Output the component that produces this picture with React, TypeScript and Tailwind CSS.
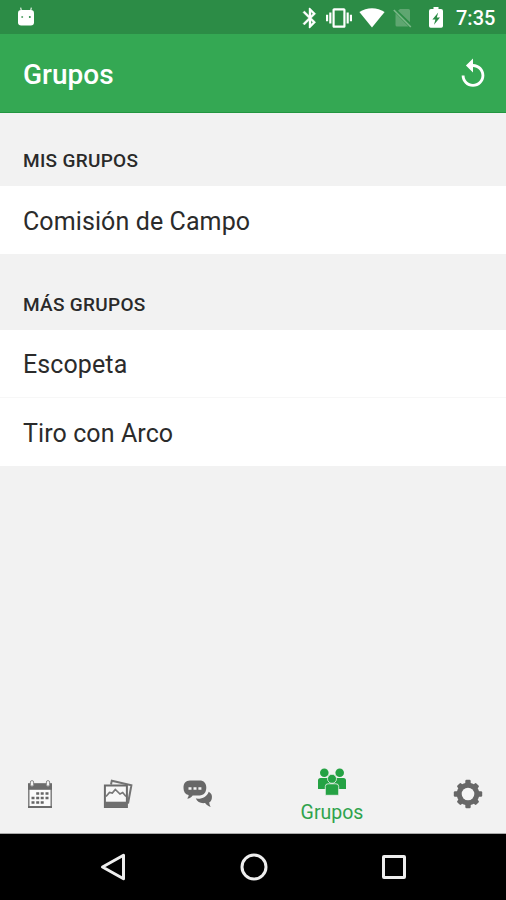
import React from 'react'

const AndroidHead = () => (
  <svg className="h-5 w-4" viewBox="0 0 16 20" fill="none">
    <path d="M3.6 4.5 2.6.6M12.4 4.5l1-3.9" stroke="#d5ead9" strokeWidth="1.3" />
    <rect x="0" y="3" width="16" height="15.5" rx="3.2" fill="#fff" />
    <circle cx="4.2" cy="10" r="1" fill="#5aa56c" />
    <circle cx="11.8" cy="10" r="1" fill="#2c8c46" />
  </svg>
)

const Bluetooth = () => (
  <svg className="h-6 w-6" viewBox="0 0 24 24" fill="currentColor" stroke="currentColor" strokeWidth=".4">
    <path d="M17.71 7.71 12 2h-1v7.59L6.41 5 5 6.41 10.59 12 5 17.59 6.41 19 11 14.41V22h1l5.71-5.71-4.3-4.29 4.3-4.29zM13 5.83l1.88 1.88L13 9.59V5.83zm1.88 10.46L13 18.17v-3.76l1.88 1.88z" />
  </svg>
)

const Vibration = () => (
  <svg className="h-[26px] w-[26px]" viewBox="0 0 24 24" fill="currentColor">
    <path d="M0 15h2V9H0v6zm3 2h2V7H3v10zm19-8v6h2V9h-2zm-3 8h2V7h-2v10zM16.5 3h-9C6.67 3 6 3.67 6 4.5v15c0 .83.67 1.5 1.5 1.5h9c.83 0 1.5-.67 1.5-1.5v-15c0-.83-.67-1.5-1.5-1.5zM16 19H8V5h8v14z" />
  </svg>
)

const Wifi = () => (
  <svg className="h-5 w-[26px]" viewBox="0 0 26 20" fill="currentColor">
    <path d="M13 19.5.4 4C4 1.5 8.4.2 13 .2S22 1.5 25.6 4z" />
  </svg>
)

const NoSim = () => (
  <svg className="h-5 w-[19px]" viewBox="0 0 19 20" fill="none">
    <path d="M7 1h8.5q1.5 0 1.5 1.5v11.8L5 2.7zM2.5 5.2 15.5 18.5H4q-1.5 0-1.5-1.5z" fill="#5fa671" />
    <path d="m.8 2 17 17" stroke="#7cb88a" strokeWidth="1.6" />
  </svg>
)

const Battery = () => (
  <svg className="h-[21px] w-[14px]" viewBox="0 0 14 21">
    <path
      d="M4.5 0h5v2H12q2 0 2 2v15q0 1.7-1.7 1.7H1.7Q0 20.7 0 19V4q0-2 2-2h2.5zM9.2 5.5 3.4 12.4h3L5 17.8l6-7.4H7.8z"
      fill="currentColor"
      fillRule="evenodd"
    />
  </svg>
)

const Replay = () => (
  <svg className="h-[34px] w-[34px]" viewBox="0 0 24 24" fill="currentColor">
    <path d="M12 5V1L7 6l5 5V7c3.31 0 6 2.69 6 6s-2.69 6-6 6-6-2.69-6-6H4c0 4.42 3.58 8 8 8s8-3.58 8-8-3.58-8-8-8z" />
  </svg>
)

const CalendarIcon = () => (
  <svg className="h-[30px] w-[30px]" viewBox="0 0 30 30" fill="none">
    <rect x="3.8" y="5" width="22.4" height="23" fill="#fafafa" stroke="#777" strokeWidth="1.4" />
    <path d="M3 4.5h24v6.3H3z" fill="#6b6b6b" />
    <path d="M3 28h24" stroke="#6b6b6b" strokeWidth="2" />
    <rect x="5.4" y="1.6" width="3.2" height="5.6" rx="1.5" fill="#f3f3f3" stroke="#888" />
    <rect x="21.4" y="1.6" width="3.2" height="5.6" rx="1.5" fill="#f3f3f3" stroke="#888" />
    <path
      d="M11.2 14.5h3M15.7 14.5h3M20.5 14.5h3M6.5 19h3M11.2 19h3M15.7 19h3M20.5 19h3M6.5 23.5h3M11.2 23.5h3M15.7 23.5h3"
      stroke="#666"
      strokeWidth="2.6"
    />
  </svg>
)

const PhotosIcon = () => (
  <svg className="h-[30px] w-[30px]" viewBox="0 0 30 30" fill="none">
    <path d="M8 5.5 8.8 1.8l19.6 4.5L25 24.5" stroke="#747474" strokeWidth="2" />
    <rect x="1.9" y="6.5" width="22" height="21.5" fill="#f8f8f8" stroke="#6b6b6b" strokeWidth="2" />
    <path d="M2 22.7h22V28H2z" fill="#6f6f6f" />
    <path d="m3 17.5 3.5-4 2.8.5 3-3.5 4.7 4.5 2.7-1.5 3.3 4" stroke="#777" strokeWidth="1.7" />
  </svg>
)

const ChatIcon = () => (
  <svg className="h-[30px] w-[30px]" viewBox="0 0 30 30">
    <path
      d="M7 1.6h9.5c4.4 0 6.8 2.7 6.8 7.2s-2.4 7.6-6.8 7.6H9.7c-1.3 2-3.3 3.2-5.6 3.2 1-.9 1.6-2.3 1.5-3.5C2.2 15.4.5 12.7.5 9c0-4.6 2.1-7.4 6.5-7.4z"
      fill="#686868"
    />
    <path d="M5.5 8.3h3v2.4h-3zM10.5 8.3h3v2.4h-3zM15.4 8.3h3v2.4h-3z" fill="#f5f5f5" />
    <path
      d="M25.7 12.7c2.5 1.3 3.6 3.5 3.2 6.3-.3 2.2-1.2 3.6-2.6 4.3 0 1.8.5 3.2 1.4 4.6-2.5-.6-4.5-2-5.6-3.8-4.6.5-7.7-.8-9.3-4.5 6.3.7 11-1.6 12.9-6.9z"
      fill="#686868"
    />
  </svg>
)

const GroupsIcon = () => (
  <svg className="h-[30px] w-[30px]" viewBox="0 0 30 30" fill="#25a244">
    <circle cx="7.3" cy="5.8" r="4.3" />
    <circle cx="22.7" cy="5.8" r="4.3" />
    <path d="M1 13.5q0-2.5 2.5-2.5H11q2.5 0 2.5 2.5v8.5H1zM16.5 13.5q0-2.5 2.5-2.5h7.5q2.5 0 2.5 2.5v8.5H16.5z" />
    <g stroke="#f3f3f3" strokeWidth=".8">
      <path d="M8.3 19.5q0-2.7 2.7-2.7h8q2.7 0 2.7 2.7v8.8H8.3z" />
      <circle cx="15" cy="11.8" r="4.5" />
    </g>
  </svg>
)

const GearIcon = () => (
  <svg className="h-[30px] w-[30px]" viewBox="0 0 30 30">
    <g fill="#676767">
      <rect x="12.3" y=".8" width="5.4" height="28.4" rx="1.2" />
      <rect x="12.3" y="1.6" width="5.4" height="26.8" rx="1.2" transform="rotate(45 15 15)" />
      <rect x="12.3" y=".8" width="5.4" height="28.4" rx="1.2" transform="rotate(90 15 15)" />
      <rect x="12.3" y="1.6" width="5.4" height="26.8" rx="1.2" transform="rotate(135 15 15)" />
      <circle cx="15" cy="15" r="11.3" />
    </g>
    <circle cx="15" cy="15" r="6.3" fill="#f5f5f5" />
  </svg>
)

const SectionTitle = ({children}: {children: React.ReactNode}) => (
  <h2 className="px-[23px] pb-3 text-[19px] leading-7 font-medium tracking-[0.3px] text-[#2a2a2a]">
    {children}
  </h2>
)

const Row = ({children}: {children: React.ReactNode}) => (
  <li className="flex h-17 items-center bg-white px-[23px] pt-[3px] text-[25px] tracking-[0.1px] text-[#2b2b2b]">
    {children}
  </li>
)

const App = () => {
  return (
    <div className="flex h-[900px] w-[506px] flex-col overflow-hidden bg-[#f2f2f2] font-['Roboto',sans-serif]">
      <div className="flex h-[34px] shrink-0 items-center bg-[#2c8c46] pl-[18px] text-white">
        <AndroidHead />
        <div className="ml-[264px] flex items-center pt-px">
          <Bluetooth />
          <div className="ml-1">
            <Vibration />
          </div>
          <div className="ml-[7px]">
            <Wifi />
          </div>
          <div className="ml-2">
            <NoSim />
          </div>
          <div className="ml-[17px]">
            <Battery />
          </div>
          <span className="ml-[13px] pt-px text-xl font-medium">7:35</span>
        </div>
      </div>

      <header className="flex h-[79px] shrink-0 items-center justify-between border-b border-[#229640] bg-[#34a853] pr-4 pl-[23px] text-white">
        <h1 className="pt-1 text-[28px] font-medium">Grupos</h1>
        <div className="pt-0.5">
          <Replay />
        </div>
      </header>

      <main className="flex-1">
        <section className="pt-[34px]">
          <SectionTitle>MIS GRUPOS</SectionTitle>
          <ul className="-mt-px">
            <Row>Comisión de Campo</Row>
          </ul>
        </section>
        <section className="pt-[37px]">
          <SectionTitle>MÁS GRUPOS</SectionTitle>
          <ul className="-mt-px divide-y divide-[#f7f7f7]">
            <Row>Escopeta</Row>
            <Row>Tiro con Arco</Row>
          </ul>
        </section>
      </main>

      <nav className="flex h-20 shrink-0 border-b border-[#aaa]">
        <div className="flex w-[79px] items-center justify-center">
          <CalendarIcon />
        </div>
        <div className="flex w-[78px] items-center justify-center">
          <PhotosIcon />
        </div>
        <div className="flex w-[81px] items-center justify-center">
          <ChatIcon />
        </div>
        <div className="flex w-[188px] flex-col items-center pt-[13px]">
          <GroupsIcon />
          <span className="pt-0.5 text-[19.5px] leading-7 text-[#2fa34d]">Grupos</span>
        </div>
        <div className="flex w-[80px] items-center justify-center pl-[3px]">
          <GearIcon />
        </div>
      </nav>

      <div className="flex h-[66px] shrink-0 items-center bg-black pl-[100px]">
        <svg className="h-7 w-[26px]" viewBox="0 0 26 28" fill="none">
          <path d="M2.5 14 23.5 2.3v23.4z" stroke="#eee" strokeWidth="3" strokeLinejoin="round" />
        </svg>
        <svg className="ml-[114px] h-7 w-7" viewBox="0 0 28 28" fill="none">
          <circle cx="14" cy="14" r="12" stroke="#eee" strokeWidth="3" />
        </svg>
        <div className="ml-[114px] h-6 w-6 rounded-xs border-3 border-[#eee]" />
      </div>
    </div>
  )
}

export default App
